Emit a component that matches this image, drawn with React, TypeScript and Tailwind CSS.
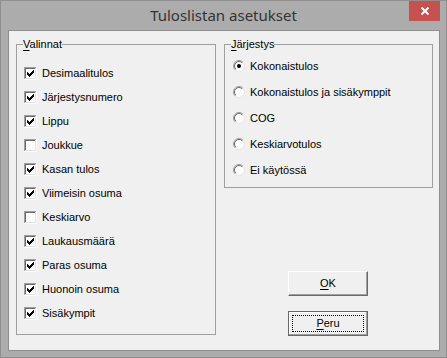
import React from 'react';

const ui = { fontFamily: '"Liberation Sans", Arial, sans-serif' };

const CHECKS: [string, boolean][] = [
  ['Desimaalitulos', true],
  ['Järjestysnumero', true],
  ['Lippu', true],
  ['Joukkue', false],
  ['Kasan tulos', true],
  ['Viimeisin osuma', true],
  ['Keskiarvo', false],
  ['Laukausmäärä', true],
  ['Paras osuma', true],
  ['Huonoin osuma', true],
  ['Sisäkympit', true],
];

const ORDER = ['Kokonaistulos', 'Kokonaistulos ja sisäkymppit', 'COG', 'Keskiarvotulos', 'Ei käytössä'];

// klassinen väkänen 7x7
const TICK = ['......X', '.....XX', 'X...XXX', 'XX.XXX.', 'XXXXX..', '.XXX...', '..X....'];

function CheckBox({ checked }: { checked: boolean }) {
  return (
    <svg width="13" height="13" viewBox="0 0 13 13" shapeRendering="crispEdges" className="shrink-0">
      <rect x="0" y="0" width="13" height="13" fill="#ffffff" />
      <rect x="0" y="0" width="12" height="1" fill="#a0a0a0" />
      <rect x="0" y="0" width="1" height="12" fill="#a0a0a0" />
      <rect x="1" y="1" width="10" height="1" fill="#696969" />
      <rect x="1" y="1" width="1" height="10" fill="#696969" />
      <rect x="1" y="11" width="11" height="1" fill="#e3e3e3" />
      <rect x="11" y="1" width="1" height="11" fill="#e3e3e3" />
      {checked &&
        TICK.flatMap((row, y) =>
          row.split('').map((c, x) =>
            c === 'X' ? <rect key={`${x}-${y}`} x={x + 3} y={y + 3} width="1" height="1" fill="#000" /> : null
          )
        )}
    </svg>
  );
}

function Radio({ checked }: { checked: boolean }) {
  return (
    <svg width="12" height="12" viewBox="0 0 12 12" className="shrink-0">
      <circle cx="6" cy="6" r="5.5" fill="#ffffff" stroke="#e3e3e3" strokeWidth="1" />
      <path d="M2.1 9.9 A5.5 5.5 0 0 1 9.9 2.1" stroke="#a0a0a0" strokeWidth="1" fill="none" />
      <path d="M2.8 9.2 A4.5 4.5 0 0 1 9.2 2.8" stroke="#696969" strokeWidth="1" fill="none" />
      {checked && <circle cx="6" cy="6" r="2" fill="#000" />}
    </svg>
  );
}

function GroupLabel({ hot, rest }: { hot: string; rest: string }) {
  return (
    <div className="-mt-[8px] ml-[6px] self-start h-[14px] leading-[14px] bg-[#f0f0f0] text-[11px] text-black">
      <span className="underline underline-offset-[2px]">{hot}</span>
      {rest}
    </div>
  );
}

export default function App() {
  return (
    <div className="w-[447px] h-[358px] bg-[#acacac] border border-[#8f8f8f] flex flex-col" style={ui}>
      {/* otsikkorivi */}
      <div className="h-[29px] flex items-start relative">
        <div
          className="flex-1 h-[29px] flex items-center justify-center text-[15px] text-[#333]"
          style={{ fontFamily: '"Noto Sans", "Open Sans", sans-serif' }}
        >
          Tuloslistan asetukset
        </div>
        <div className="absolute right-[6px] top-0 w-[31px] h-[20px] bg-[#c75050] flex items-center justify-center">
          <svg width="8" height="8" viewBox="0 0 8 8">
            <path d="M0.5 0.5 L7.5 7.5 M7.5 0.5 L0.5 7.5" stroke="#fff" strokeWidth="2" />
          </svg>
        </div>
      </div>

      {/* asiakasalue */}
      <div className="ml-[7px] w-[432px] h-[321px] border border-[#8e8e8e] bg-[#f0f0f0] flex pl-[7px] pt-[13px] pr-[6px]">
        {/* Valinnat */}
        <div className="w-[200px] h-[291px] border border-[#a0a0a0] flex flex-col">
          <GroupLabel hot="V" rest="alinnat" />
          <div className="mt-[10px] pl-[7px] flex flex-col">
            {CHECKS.map(([label, on]) => (
              <div key={label} className="h-[24px] flex items-center gap-[5px] text-[11px] text-black">
                <CheckBox checked={on} />
                <span>{label}</span>
              </div>
            ))}
          </div>
        </div>

        <div className="ml-[8px] w-[209px] flex flex-col">
          {/* Järjestys */}
          <div className="h-[144px] border border-[#a0a0a0] flex flex-col">
            <GroupLabel hot="J" rest="ärjestys" />
            <div className="mt-[2px] pl-[8px] flex flex-col">
              {ORDER.map((label, i) => (
                <div key={label} className="h-[26px] flex items-center gap-[5px] text-[11px] text-black">
                  <Radio checked={i === 0} />
                  <span>{label}</span>
                </div>
              ))}
            </div>
          </div>

          <div className="ml-[64px] mt-[83px] w-[80px] h-[25px] bg-[#f0f0f0] border-t border-l border-white border-r border-b border-r-[#696969] border-b-[#696969] shadow-[inset_-1px_-1px_0_#a0a0a0] flex items-center justify-center text-[11px] text-black">
            <span>
              <span className="underline underline-offset-[2px]">O</span>K
            </span>
          </div>

          <div className="ml-[64px] mt-[15px] w-[80px] h-[25px] bg-[#f0f0f0] border border-[#696969] shadow-[inset_-1px_-1px_0_#a0a0a0,inset_1px_1px_0_#fff] p-[3px] flex">
            <div className="flex-1 border border-dotted border-black flex items-center justify-center text-[11px] text-black">
              <span>
                <span className="underline underline-offset-[2px]">P</span>eru
              </span>
            </div>
          </div>
        </div>
      </div>
    </div>
  );
}
